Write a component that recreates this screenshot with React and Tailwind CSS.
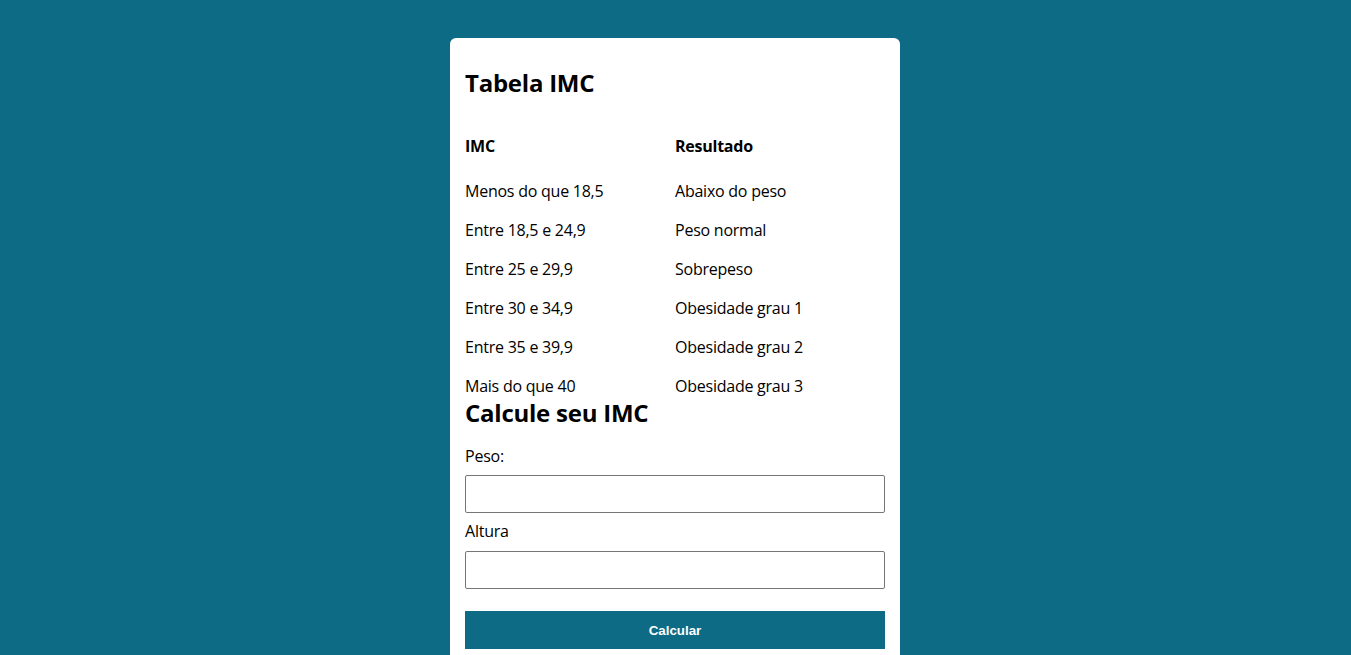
const faixas = [
  { imc: 'Menos do que 18,5', resultado: 'Abaixo do peso' },
  { imc: 'Entre 18,5 e 24,9', resultado: 'Peso normal' },
  { imc: 'Entre 25 e 29,9', resultado: 'Sobrepeso' },
  { imc: 'Entre 30 e 34,9', resultado: 'Obesidade grau 1' },
  { imc: 'Entre 35 e 39,9', resultado: 'Obesidade grau 2' },
  { imc: 'Mais do que 40', resultado: 'Obesidade grau 3' },
];

const App = () => {
  return (
    <div className="min-h-screen bg-[#0d6b86] pt-[38px] pr-[1px] font-['Open_Sans',sans-serif] tracking-[-0.015em] text-black">
      <div className="mx-auto w-[450px] rounded-t-[6px] bg-white px-[15px] pt-[28px] pb-[20px]">
        <h2 className="text-[24px] leading-[33px] font-bold">Tabela IMC</h2>

        {/* Tabela */}
        <div className="mt-[36px] grid grid-cols-2 text-[16px] leading-[22px] font-bold">
          <span>IMC</span>
          <span>Resultado</span>
        </div>
        <div className="mt-[23px] flex flex-col gap-y-[17px] text-[16px] leading-[22px]">
          {faixas.map((f) => (
            <div key={f.imc} className="grid grid-cols-2">
              <span>{f.imc}</span>
              <span>{f.resultado}</span>
            </div>
          ))}
        </div>

        {/* Formulário */}
        <h2 className="-mt-[1px] text-[24px] leading-[33px] font-bold">Calcule seu IMC</h2>
        <label className="mt-[15.5px] block text-[16px] leading-[22px]">Peso:</label>
        <input
          type="text"
          className="mt-[8.5px] block h-[38px] w-full rounded-[2px] border border-[#767676] bg-white"
        />
        <label className="mt-[7px] block text-[16px] leading-[22px]">Altura</label>
        <input
          type="text"
          className="mt-[9px] block h-[38px] w-full rounded-[2px] border border-[#767676] bg-white"
        />
        <button
          type="button"
          className="mt-[22px] block h-[38px] w-full bg-[#0d6b86] pt-[1px] font-['Liberation_Sans',Arial,sans-serif] text-[13.33px] font-bold tracking-normal text-white"
        >
          Calcular
        </button>
      </div>
    </div>
  );
};

export default App;
